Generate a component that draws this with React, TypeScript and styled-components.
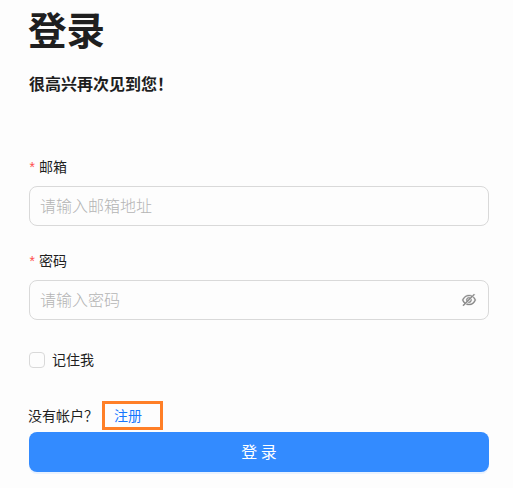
import React from 'react';
import styled, { createGlobalStyle } from 'styled-components';
import { AiOutlineEyeInvisible } from 'react-icons/ai';

const GlobalStyle = createGlobalStyle`
  * { box-sizing: border-box; }
  body {
    margin: 0;
    background: #fdfdfd;
    color: #1f1f1f;
    font-family: "Noto Sans CJK SC", sans-serif;
    font-size: 14px;
    line-height: 22px;
  }
`;

const Page = styled.main`
  width: 513px;
  height: 488px;
  padding: 5px 24px 0 29px;
  overflow: hidden;
`;

const Title = styled.h1`
  margin: 0 0 19px -1px;
  font-size: 38.5px;
  font-weight: 700;
  line-height: 47px;
`;

const Subtitle = styled.h5`
  margin: 0 0 61px;
  font-size: 16px;
  font-weight: 700;
  line-height: 24px;
`;

const Form = styled.form`
  width: 460px;
  display: flex;
  flex-direction: column;
`;

const Field = styled.div`
  display: flex;
  flex-direction: column;
  gap: 8px;
  margin-bottom: 24px;
`;

const Label = styled.label`
  display: flex;
  align-items: center;
  height: 22px;
  padding-bottom: 2px;
`;

const Required = styled.span`
  width: 11px;
  margin-left: -1px;
  padding-top: 5px;
  color: #ff4d4f;
  font-family: "Liberation Mono", monospace;
  font-size: 14px;
`;

const InputBox = styled.div`
  display: flex;
  align-items: center;
  height: 40px;
  padding: 0 11px 0 10px;
  border: 1px solid #d9d9d9;
  border-radius: 8px;
`;

const Input = styled.input`
  flex: 1;
  min-width: 0;
  padding: 0 0 2px;
  border: 0;
  outline: 0;
  background: transparent;
  font: 16px/24px "Noto Sans CJK SC", sans-serif;
  &::placeholder { color: #b4b4b4; opacity: 1; font-weight: 300; }
`;

const ToggleIcon = styled(AiOutlineEyeInvisible)`
  width: 16px;
  height: 16px;
  color: #888;
  stroke-width: 20px;
`;

const Remember = styled.label`
  display: flex;
  align-items: center;
  gap: 7px;
  height: 32px;
  margin-bottom: 24px;
`;

const RememberText = styled.span`
  padding-bottom: 2px;
`;

const Checkbox = styled.input`
  appearance: none;
  width: 16px;
  height: 16px;
  margin: 0;
  border: 1px solid #d9d9d9;
  border-radius: 4px;
`;

const SignUpRow = styled.div`
  display: flex;
  align-items: center;
  height: 32px;
  margin-left: -1px;
`;

const Question = styled.span`
  width: 74px;
  padding-bottom: 2px;
  white-space: nowrap;
`;

const RegisterLink = styled.a`
  display: flex;
  align-items: center;
  width: 61px;
  height: 29px;
  margin-top: -1px;
  padding: 0 0 2px 9px;
  border: 3px solid #ff7f27;
  color: #1677ff;
  text-decoration: none;
`;

const Submit = styled.button`
  height: 40px;
  padding: 0 0 2px 0;
  border: 0;
  border-radius: 8px;
  background: #338bff;
  box-shadow: 0 2px 0 #e9f2ff;
  color: #fff;
  font: 16px/24px "Noto Sans CJK SC", sans-serif;
`;

export default function App() {
  return (
    <>
      <GlobalStyle />
      <Page>
        <Title>登录</Title>
        <Subtitle>很高兴再次见到您！</Subtitle>
        <Form>
          <Field>
            <Label htmlFor="email"><Required>*</Required>邮箱</Label>
            <InputBox><Input id="email" placeholder="请输入邮箱地址" /></InputBox>
          </Field>
          <Field>
            <Label htmlFor="password"><Required>*</Required>密码</Label>
            <InputBox>
              <Input id="password" type="password" placeholder="请输入密码" />
              <ToggleIcon />
            </InputBox>
          </Field>
          <Remember>
            <Checkbox type="checkbox" />
            <RememberText>记住我</RememberText>
          </Remember>
          <SignUpRow>
            <Question>没有帐户？</Question>
            <RegisterLink href="#">注册</RegisterLink>
          </SignUpRow>
          <Submit type="button">登 录</Submit>
        </Form>
      </Page>
    </>
  );
}
